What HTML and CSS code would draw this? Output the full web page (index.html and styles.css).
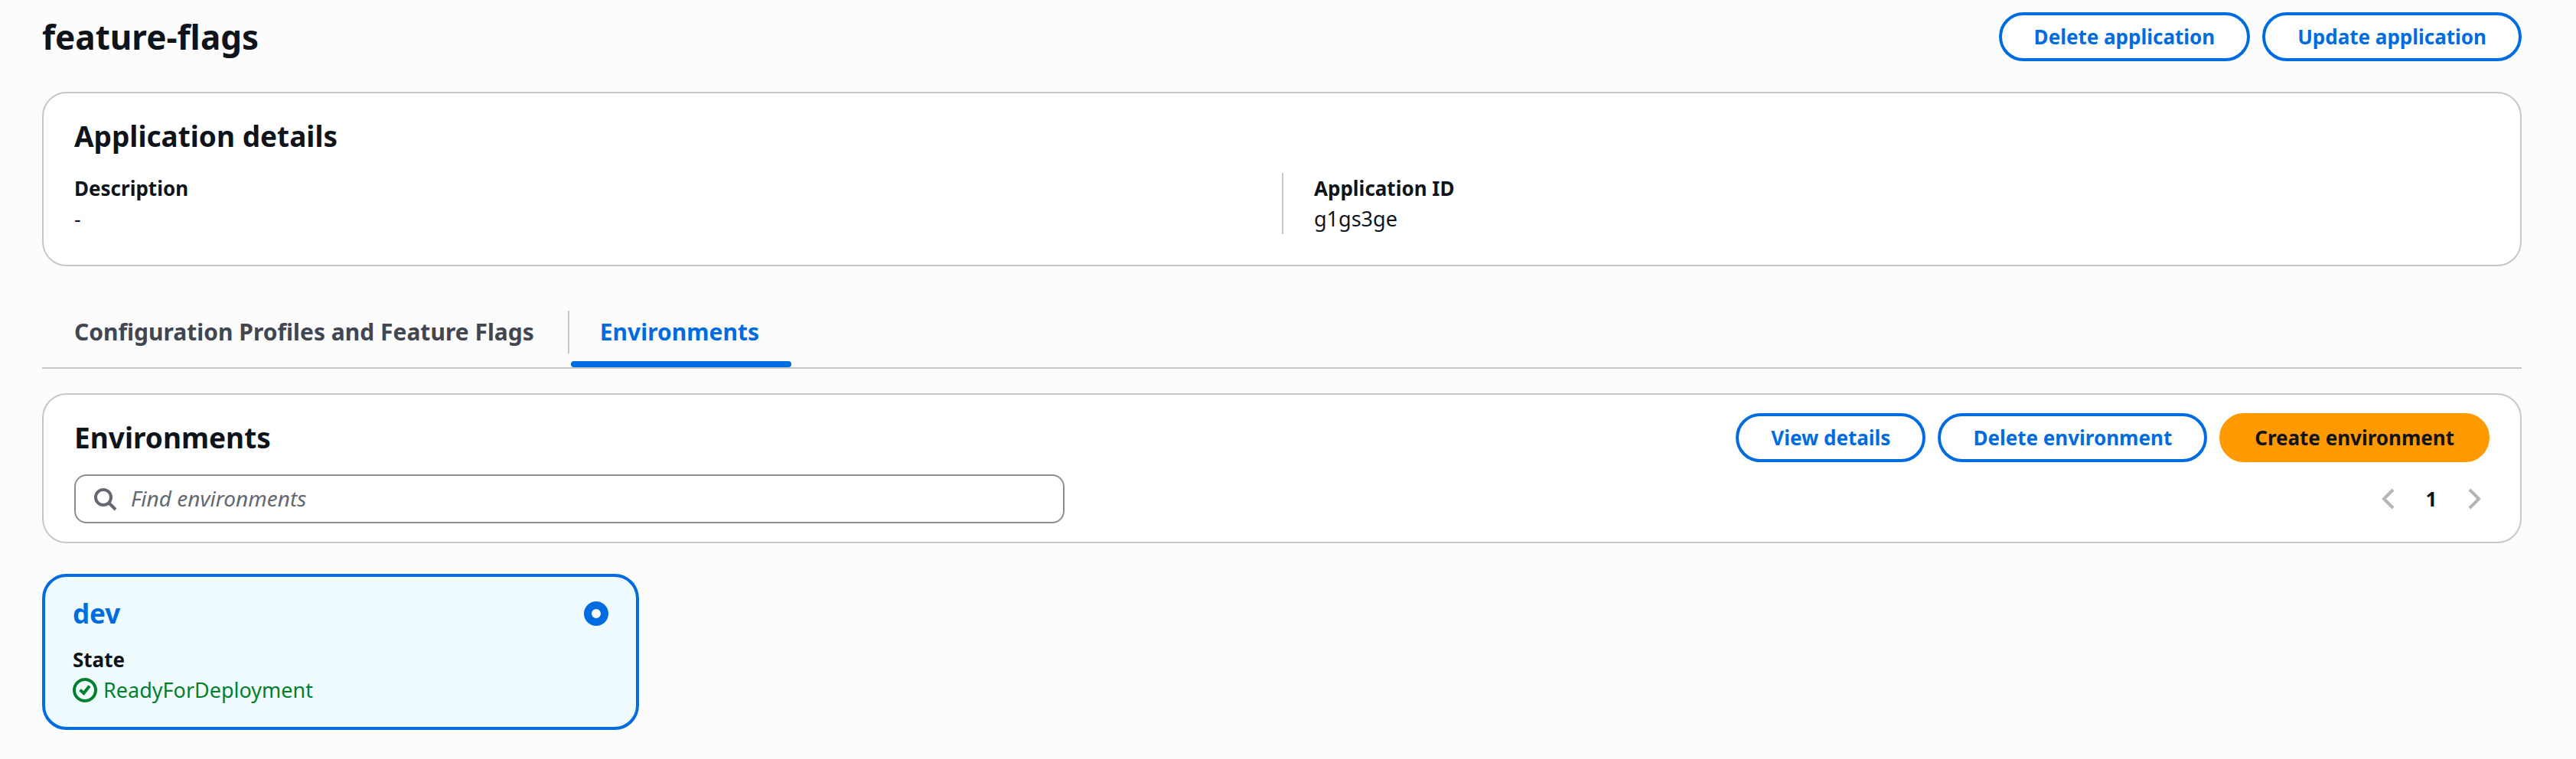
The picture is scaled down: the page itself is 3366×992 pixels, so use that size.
FILE: index.html
```html
<!DOCTYPE html>
<html lang="en">
<head>
    <meta charset="UTF-8">
    <meta name="viewport" content="width=device-width, initial-scale=1.0">
    <title>feature-flags</title>
    <link rel="stylesheet" href="styles.css">
</head>
<body>
    <main class="page">
        <header class="page-header">
            <h1>feature-flags</h1>
            <div class="actions">
                <button type="button" class="btn">Delete application</button>
                <button type="button" class="btn">Update application</button>
            </div>
        </header>

        <section class="card details">
            <h2>Application details</h2>
            <dl class="columns">
                <div class="column">
                    <dt>Description</dt>
                    <dd>-</dd>
                </div>
                <div class="column">
                    <dt>Application ID</dt>
                    <dd>g1gs3ge</dd>
                </div>
            </dl>
        </section>

        <nav class="tabs">
            <a href="#profiles" class="tab">Configuration Profiles and Feature Flags</a>
            <a href="#environments" class="tab active">Environments</a>
        </nav>

        <section class="card environments" id="environments">
            <div class="card-header">
                <h2>Environments</h2>
                <div class="actions">
                    <button type="button" class="btn">View details</button>
                    <button type="button" class="btn">Delete environment</button>
                    <button type="button" class="btn btn-primary">Create environment</button>
                </div>
            </div>
            <div class="tools">
                <label class="search">
                    <svg class="icon" viewBox="0 0 16 16" aria-hidden="true">
                        <circle cx="7" cy="7" r="5"/>
                        <path d="m15 15-4.5-4.5"/>
                    </svg>
                    <input type="search" placeholder="Find environments" aria-label="Find environments">
                </label>
                <div class="pagination">
                    <button type="button" class="page-btn" aria-label="Previous page" disabled>
                        <svg class="icon" viewBox="0 0 16 16"><path d="M11 2 5 8l6 6"/></svg>
                    </button>
                    <button type="button" class="page-number">1</button>
                    <button type="button" class="page-btn" aria-label="Next page" disabled>
                        <svg class="icon" viewBox="0 0 16 16"><path d="m5 2 6 6-6 6"/></svg>
                    </button>
                </div>
            </div>
        </section>

        <div class="env-list">
            <article class="env-card">
                <div class="env-header">
                    <a href="#dev" class="env-name">dev</a>
                    <input type="radio" name="environment" class="radio" aria-label="dev" checked>
                </div>
                <div class="env-label">State</div>
                <div class="status">
                    <svg class="icon" viewBox="0 0 16 16" aria-hidden="true">
                        <circle cx="8" cy="8" r="7"/>
                        <path d="M4.8 7.8 7.2 10 11 5.3"/>
                    </svg>
                    ReadyForDeployment
                </div>
            </article>
        </div>
    </main>
</body>
</html>
```

FILE: styles.css
```css
* {
    box-sizing: border-box;
}

body {
    margin: 0;
    background-color: #fcfcfd;
    color: #0f141a;
    font-family: 'Noto Sans', 'Open Sans', sans-serif;
    font-size: 27px;
    line-height: 40px;
}

h1, h2, dl, dd {
    margin: 0;
}

h1 {
    font-size: 44px;
    line-height: 60px;
}

h2 {
    font-size: 37px;
    line-height: 48px;
}

.page {
    padding: 16px 71px 38px 55px;
}

.page-header, .card-header, .tools, .env-header {
    display: flex;
    justify-content: space-between;
    align-items: center;
}

.actions {
    display: flex;
    gap: 16px;
}

.btn {
    height: 64px;
    padding: 0 42px;
    border: 4px solid #006ce0;
    border-radius: 32px;
    background-color: #fff;
    color: #006ce0;
    font: bold 26px/40px 'Noto Sans', 'Open Sans', sans-serif;
    cursor: pointer;
}

.btn-primary {
    border-color: #ff9900;
    background-color: #ff9900;
    color: #0f141a;
}

.card {
    border: 2px solid #c6c6cd;
    border-radius: 32px;
    background-color: #fff;
}

.details {
    margin-top: 40px;
    padding: 32px 40px 40px;
}

.columns {
    display: grid;
    grid-template-columns: 1fr 1fr;
    margin-top: 24px;
}

.column + .column {
    padding-left: 40px;
    border-left: 2px solid #c6c6cd;
}

dt, .env-label {
    font-size: 26px;
    font-weight: bold;
}

.tabs {
    display: flex;
    margin-top: 48px;
    border-bottom: 2px solid #c6c6cd;
}

.tab {
    position: relative;
    padding: 18px 42px 26px;
    color: #424650;
    font-size: 30px;
    font-weight: bold;
    text-decoration: none;
}

.tab + .tab {
    margin-left: 2px;
}

.tab + .tab::before {
    content: '';
    position: absolute;
    left: 0;
    top: 10px;
    width: 2px;
    height: 56px;
    background-color: #c6c6cd;
}

.tab.active {
    color: #006ce0;
}

.tab.active::after {
    content: '';
    position: absolute;
    left: 4px;
    right: 0;
    bottom: 0;
    height: 8px;
    border-radius: 4px;
    background-color: #006ce0;
}

.environments {
    margin-top: 32px;
    padding: 24px 40px;
}

.tools {
    margin-top: 16px;
}

.icon {
    width: 32px;
    height: 32px;
    fill: none;
    stroke: currentColor;
    stroke-width: 2;
}

.search {
    display: flex;
    align-items: center;
    gap: 18px;
    width: 41%;
    height: 64px;
    padding: 0 22px;
    border: 2px solid #8c8c94;
    border-radius: 16px;
    color: #656871;
}

.search input {
    flex: 1;
    min-width: 0;
    padding: 0;
    border: none;
    outline: none;
    background: none;
    font: inherit;
}

.search input::placeholder {
    color: #656871;
    font-size: 28px;
    font-style: italic;
}

.pagination {
    display: flex;
    align-items: center;
}

.pagination button {
    display: flex;
    justify-content: center;
    padding: 0;
    border: none;
    background: none;
    font: bold 26px/40px 'Noto Sans', 'Open Sans', sans-serif;
}

.pagination .page-btn {
    width: 40px;
    color: #b4b4bb;
}

.pagination .page-number {
    width: 72px;
    color: #0f141a;
}

.env-list {
    display: grid;
    grid-template-columns: repeat(4, 1fr);
    gap: 40px;
    margin-top: 40px;
}

.env-card {
    padding: 28px 36px;
    border: 4px solid #006ce0;
    border-radius: 32px;
    background-color: #f0fbff;
}

.env-name {
    color: #006ce0;
    font-size: 35px;
    font-weight: bold;
    text-decoration: none;
}

.radio {
    appearance: none;
    width: 32px;
    height: 32px;
    margin: 0;
    border: 10px solid #006ce0;
    border-radius: 50%;
    background-color: #fff;
}

.env-label {
    margin-top: 20px;
}

.status {
    display: flex;
    align-items: center;
    gap: 8px;
    color: #00802f;
}
```
